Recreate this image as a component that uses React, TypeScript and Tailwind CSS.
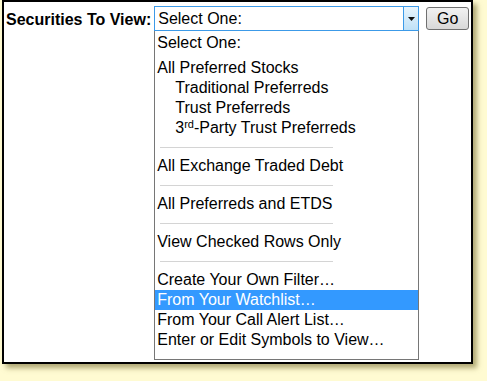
import React from 'react';

type Item = { label: React.ReactNode; indent?: boolean; selected?: boolean; sepAfter?: boolean; gapAfter?: boolean };

const items: Item[] = [
    { label: 'Select One:', gapAfter: true },
    { label: 'All Preferred Stocks' },
    { label: 'Traditional Preferreds', indent: true },
    { label: 'Trust Preferreds', indent: true },
    {
        label: (
            <>
                3<sup className="text-[11px]">rd</sup>-Party Trust Preferreds
            </>
        ),
        indent: true,
        sepAfter: true,
    },
    { label: 'All Exchange Traded Debt', sepAfter: true },
    { label: 'All Preferreds and ETDS', sepAfter: true },
    { label: 'View Checked Rows Only', sepAfter: true },
    { label: 'Create Your Own Filter…' },
    { label: 'From Your Watchlist…', selected: true },
    { label: 'From Your Call Alert List…' },
    { label: 'Enter or Edit Symbols to View…' },
];

export default function App() {
    return (
        <div className="w-[487px] h-[381px] bg-[#fffbd2] pl-[2px] font-['Liberation_Sans',Arial,sans-serif] text-[16px] text-black">
            <div className="w-[471px] h-[364px] bg-white border-2 border-black shadow-[4px_4px_5px_rgba(110,100,40,0.55)] flex items-start pt-[4px] pl-[2px]">
                <div className="font-bold pt-[4px] pr-[3px] leading-[20px]">Securities To View:</div>
                <div className="flex flex-col">
                    <div className="w-[265px] h-[25px] border border-[#3c9ae8] flex items-center">
                        <span className="flex-1 pl-[3px] leading-[20px]">Select One:</span>
                        <span className="w-[15px] h-[23px] border-l border-[#3c9ae8] bg-gradient-to-b from-[#e9f5fd] to-[#bfe1f7] flex items-center justify-center">
                            <svg width="7" height="4" viewBox="0 0 7 4">
                                <path d="M0 0h7L3.5 4z" fill="#111" />
                            </svg>
                        </span>
                    </div>
                    <div className="w-[265px] h-[329px] border border-t-0 border-[#767676] pt-[2px]">
                        {items.map((item, idx) => (
                            <div key={idx} className={item.gapAfter ? 'mb-[5px]' : ''}>
                                <div
                                    className={`h-[20px] leading-[20px] whitespace-nowrap ${item.indent ? 'pl-[20px]' : 'pl-[2px]'} ${
                                        item.selected ? 'bg-[#3399ff] text-white' : ''
                                    }`}
                                >
                                    {item.label}
                                </div>
                                {item.sepAfter && (
                                    <div className="h-[18px] flex items-center pl-[5px]">
                                        <div className="w-[173px] h-[1px] bg-[#d4d4d4]" />
                                    </div>
                                )}
                            </div>
                        ))}
                    </div>
                </div>
                <button className="ml-[7px] mt-[1px] w-[43px] h-[23px] rounded-[3px] border border-[#707070] bg-gradient-to-b from-[#f2f2f2] to-[#d8d8d8] leading-[20px]">
                    Go
                </button>
            </div>
        </div>
    );
}
